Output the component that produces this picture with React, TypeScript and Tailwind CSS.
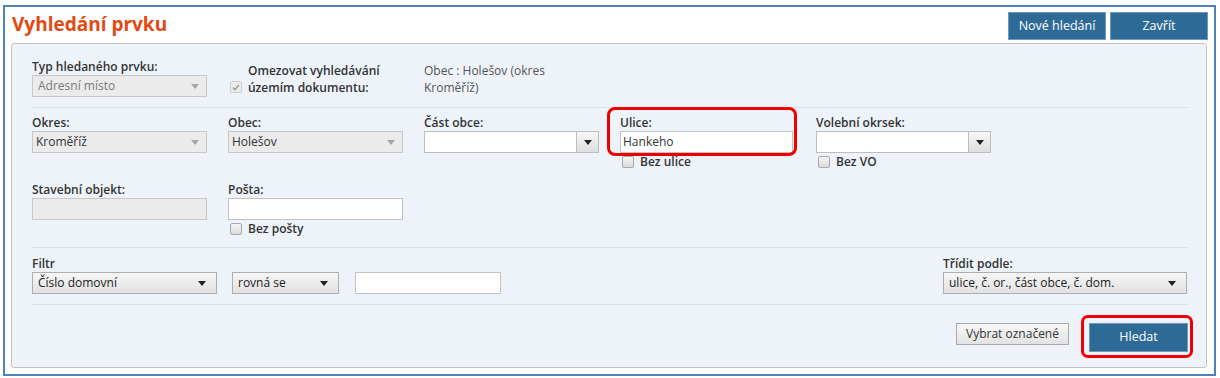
import type { FC, ReactNode } from 'react'

const Caret: FC<{ color?: string }> = ({ color = '#222' }) => (
	<svg width="8" height="5" viewBox="0 0 8 5" aria-hidden="true">
		<path d="M0 0h8L4 5z" fill={color} />
	</svg>
)

const Label: FC<{ children: ReactNode }> = ({ children }) => (
	<div className="font-semibold text-[#333] text-[12px] leading-[17px]">{children}</div>
)

type SelectKind = 'disabled' | 'combo' | 'native'

const Select: FC<{ value?: string; kind: SelectKind; className?: string; muted?: boolean }> = ({
	value = '',
	kind,
	className = '',
	muted
}) => {
	if (kind === 'native') {
		return (
			<div
				className={`flex h-[22px] items-center justify-between border border-[#adadad] bg-gradient-to-b from-[#f6f6f6] to-[#e2e2e2] pr-[10px] pl-[5px] text-[#222] text-[12px] ${className}`}
			>
				<span>{value}</span>
				<Caret />
			</div>
		)
	}
	const disabled = kind === 'disabled'
	return (
		<div
			className={`flex h-[22px] border ${disabled ? 'border-[#c8c8c8] bg-[#ebebeb]' : 'border-[#bdbdbd] bg-white'} ${className}`}
		>
			<span
				className={`flex flex-1 items-center pl-[3px] text-[12px] ${muted ? 'pl-[5px] text-[#7a7a7a]' : 'text-[#333]'}`}
			>
				{value}
			</span>
			{disabled ? (
				<span className="flex w-[22px] items-center justify-center">
					<Caret color="#a6a6a6" />
				</span>
			) : (
				<span className="flex w-[22px] items-center justify-center border-[#bdbdbd] border-l bg-gradient-to-b from-[#f7f7f7] to-[#dedede]">
					<Caret />
				</span>
			)}
		</div>
	)
}

const TextInput: FC<{ value?: string; disabled?: boolean; className?: string }> = ({
	value = '',
	disabled,
	className = ''
}) => (
	<div
		className={`flex h-[22px] items-center border pl-[2px] text-[#333] text-[12px] ${disabled ? 'border-[#c8c8c8] bg-[#ebebeb]' : 'border-[#c2c2c2] bg-white'} ${className}`}
	>
		{value}
	</div>
)

const Checkbox: FC<{ checked?: boolean }> = ({ checked }) => (
	<span
		className={`flex size-[12px] shrink-0 items-center justify-center rounded-[2px] border ${checked ? 'border-[#cfcfcf] bg-[#ececec]' : 'border-[#a9a9a9] bg-gradient-to-b from-[#f4f4f4] to-[#dcdcdc]'}`}
	>
		{checked && (
			<svg width="8" height="7" viewBox="0 0 8 7" aria-hidden="true">
				<path d="M1 3.6l2 2L7 1" fill="none" stroke="#a0a0a0" strokeWidth="1.6" />
			</svg>
		)}
	</span>
)

const CheckRow: FC<{ label: string }> = ({ label }) => (
	<div className="flex h-[17px] items-center pl-[2px]">
		<span className="mt-[1px]">
			<Checkbox />
		</span>
		<span className="ml-[6px] font-semibold text-[#333] text-[12px] leading-[17px]">{label}</span>
	</div>
)

const Separator = () => <div className="h-px bg-[#dbe1e8]" />

const BlueButton: FC<{ children: ReactNode; className?: string }> = ({ children, className = '' }) => (
	<button
		type="button"
		className={`flex items-center justify-center border border-[#6f9abb] bg-[#2e6a96] text-[12.5px] text-white ${className}`}
	>
		{children}
	</button>
)

export default function App() {
	return (
		<div className="relative h-[378px] w-[1220px] bg-white pt-[5px] pl-[3px] font-['Open_Sans',sans-serif]">
			<div className="flex h-[371px] w-[1213px] flex-col border-2 border-[#4f81bd]">
				<div className="flex h-[36px] items-start justify-between pt-[5px] pr-[6px] pl-[7px]">
					<h1 className="font-bold text-[#e5480f] text-[19px] leading-[24px]">Vyhledání prvku</h1>
					<div className="flex gap-[4px]">
						<BlueButton className="h-[28px] w-[98px]">Nové hledání</BlueButton>
						<BlueButton className="h-[28px] w-[98px]">Zavřít</BlueButton>
					</div>
				</div>

				<div className="ml-[6px] flex h-[325px] w-[1196px] flex-col rounded-[3px] border border-[#c3c3c3] bg-[#eef3fa] pr-[18px] pl-[20px]">
					{/* typ prvku */}
					<div className="grid h-[63px] grid-cols-[196px_196px_auto] pt-[14px]">
						<div>
							<Label>Typ hledaného prvku:</Label>
							<Select kind="disabled" value="Adresní místo" muted className="w-[175px]" />
						</div>
						<div className="mt-[4px] flex pl-[2px]">
							<span className="mt-[19px]">
								<Checkbox checked />
							</span>
							<span className="ml-[6px] font-semibold text-[#333] text-[12px] leading-[17px]">
								Omezovat vyhledávání
								<br />
								územím dokumentu:
							</span>
						</div>
						<div className="mt-[4px] text-[#555] text-[12px] leading-[17px]">
							Obec : Holešov (okres
							<br />
							Kroměříž)
						</div>
					</div>
					<Separator />

					{/* adresa */}
					<div className="grid h-[139px] grid-cols-[196px_196px_196px_196px_auto] content-start gap-y-[11px] pt-[6px]">
						<div>
							<Label>Okres:</Label>
							<Select kind="disabled" value="Kroměříž" className="w-[175px]" />
						</div>
						<div>
							<Label>Obec:</Label>
							<Select kind="disabled" value="Holešov" className="w-[175px]" />
						</div>
						<div>
							<Label>Část obce:</Label>
							<Select kind="combo" className="w-[175px]" />
						</div>
						<div>
							<Label>Ulice:</Label>
							<TextInput value="Hankeho" className="w-[173px]" />
							<CheckRow label="Bez ulice" />
						</div>
						<div>
							<Label>Volební okrsek:</Label>
							<Select kind="combo" className="w-[175px]" />
							<CheckRow label="Bez VO" />
						</div>
						<div>
							<Label>Stavební objekt:</Label>
							<TextInput disabled className="w-[175px]" />
						</div>
						<div>
							<Label>Pošta:</Label>
							<TextInput className="w-[175px]" />
							<CheckRow label="Bez pošty" />
						</div>
					</div>
					<Separator />

					{/* filtr */}
					<div className="flex h-[56px] items-start justify-between pt-[7px]">
						<div>
							<Label>Filtr</Label>
							<div className="flex">
								<Select kind="native" value="Číslo domovní" className="w-[185px]" />
								<Select kind="native" value="rovná se" className="ml-[15px] w-[107px]" />
								<TextInput className="ml-[16px] w-[146px]" />
							</div>
						</div>
						<div className="mr-px w-[244px]">
							<Label>Třídit podle:</Label>
							<Select kind="native" value="ulice, č. or., část obce, č. dom." />
						</div>
					</div>
					<Separator />

					<div className="flex items-start justify-end gap-[20px] pt-[18px]">
						<button
							type="button"
							className="h-[22px] w-[113px] border border-[#a9a9a9] bg-gradient-to-b from-[#f8f8f8] to-[#e2e2e2] text-[#333] text-[12px]"
						>
							Vybrat označené
						</button>
						<BlueButton className="h-[29px] w-[99px]">Hledat</BlueButton>
					</div>
				</div>
			</div>

			{/* annotations */}
			<div className="pointer-events-none absolute top-[107px] left-[607px] h-[49px] w-[190px] rounded-[8px] border-[3px] border-[#ee0000]" />
			<div className="pointer-events-none absolute top-[315px] left-[1081px] h-[43px] w-[112px] rounded-[7px] border-[3px] border-[#ee0000]" />
		</div>
	)
}
